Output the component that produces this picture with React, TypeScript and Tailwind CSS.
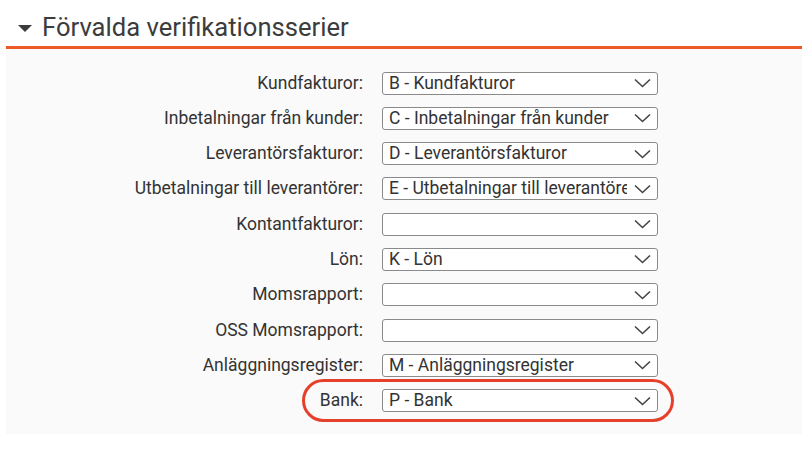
const rows: { label: string; value: string }[] = [
  { label: "Kundfakturor:", value: "B - Kundfakturor" },
  { label: "Inbetalningar från kunder:", value: "C - Inbetalningar från kunder" },
  { label: "Leverantörsfakturor:", value: "D - Leverantörsfakturor" },
  { label: "Utbetalningar till leverantörer:", value: "E - Utbetalningar till leverantörer" },
  { label: "Kontantfakturor:", value: "" },
  { label: "Lön:", value: "K - Lön" },
  { label: "Momsrapport:", value: "" },
  { label: "OSS Momsrapport:", value: "" },
  { label: "Anläggningsregister:", value: "M - Anläggningsregister" },
  { label: "Bank:", value: "P - Bank" },
];

const Chevron = () => (
  <svg width="17" height="10" viewBox="0 0 17 10" className="shrink-0">
    <path d="M1 1.5 L8.5 8.5 L16 1.5" fill="none" stroke="#444" strokeWidth="1.6" />
  </svg>
);

const SelectBox = ({ value }: { value: string }) => (
  <div className="flex items-center gap-[7px] w-[276px] h-[23px] bg-white border border-[#8a8a8a] rounded-[3px] pl-[6px] pr-[6px]">
    <span className="flex-1 overflow-hidden whitespace-nowrap text-[17.5px] leading-[21px] text-[#333]">
      {value}
    </span>
    <Chevron />
  </div>
);

export default function App() {
  return (
    <div className="w-[802px] h-[466px] bg-white font-['Roboto',sans-serif]">
      {/* Header */}
      <div className="flex items-center h-[46px] pl-[18px] pt-[10px]">
        <svg width="14" height="7" viewBox="0 0 14 7">
          <path d="M0 0 L14 0 L7 7 Z" fill="#3c3c3c" />
        </svg>
        <h2 className="ml-[10px] text-[25.6px] leading-none text-[#3c3c3c]">
          Förvalda verifikationsserier
        </h2>
      </div>
      <div className="ml-[6px] h-[2.5px] bg-[#ee5a26]" />

      {/* Panel */}
      <div className="ml-[6px] bg-[#fafafa] pt-[23px] pb-[22px] flex flex-col gap-[12.3px]">
        {rows.map((r) => (
          <div key={r.label} className="relative flex items-center">
            <div className="w-[357px] text-right text-[17.5px] leading-[21px] text-[#333]">{r.label}</div>
            <div className="ml-[19px]">
              <SelectBox value={r.value} />
            </div>
            {r.label === "Bank:" && (
              <div className="absolute left-[296px] top-[-10px] w-[372px] h-[43px] rounded-full border-[3px] border-[#e4402b]" />
            )}
          </div>
        ))}
      </div>
    </div>
  );
}
